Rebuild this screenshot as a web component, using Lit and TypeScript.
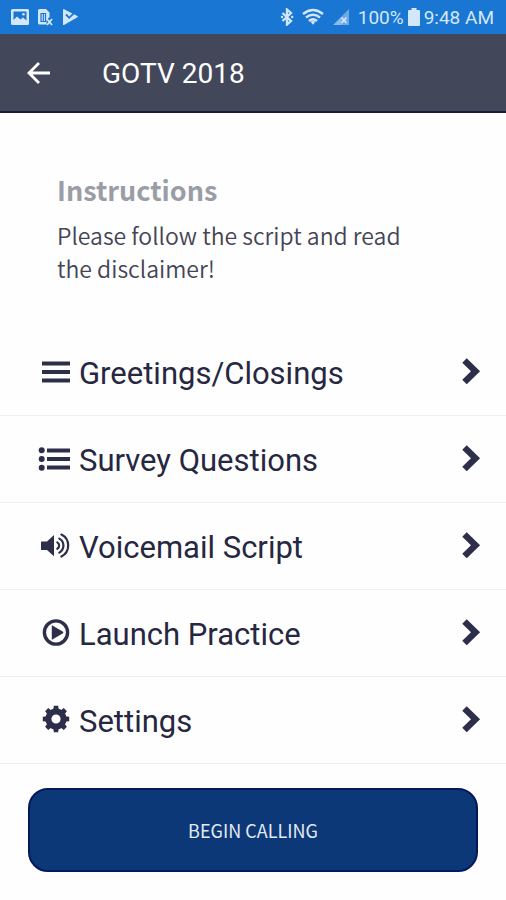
import { LitElement, html, svg, css } from "lit";
import { customElement } from "lit/decorators.js";

const icons = {
  bars: svg`<path d="M6 7.5H30M6 16H30M6 24.5H30" stroke="currentColor" stroke-width="4" stroke-linecap="square" />`,
  list: svg`
    <path d="M11 7.5H30M11 16H30M11 24.5H30" stroke="currentColor" stroke-width="4" stroke-linecap="square" />
    <circle cx="3.7" cy="7.3" r="3" /><circle cx="3.7" cy="16" r="3" /><circle cx="3.7" cy="24.7" r="3" />`,
  volume: svg`
    <path d="M3.5 11.5H9L16 5V26.2L9 20H3.5Q3 20 3 19.5V12Q3 11.5 3.5 11.5Z" />
    <path d="M19.3 12.4A3.7 3.7 0 0 1 19.3 18.8M21.3 8.6A8 8 0 0 1 21.3 22.6M23.4 4.6A12.3 12.3 0 0 1 23.4 26.6"
      fill="none" stroke="currentColor" stroke-width="2.2" stroke-linecap="round" />`,
  play: svg`
    <circle cx="18" cy="15.5" r="11.6" fill="none" stroke="currentColor" stroke-width="3.4" />
    <path d="M13.8 8.7Q13.8 8.1 14.4 8.5L25 14.8Q25.8 15.5 25 16.2L14.4 22.5Q13.8 22.9 13.8 22.3Z" />`,
  gear: svg`
    <circle cx="18" cy="15" r="7.6" fill="none" stroke="currentColor" stroke-width="6" />
    ${[0, 45, 90, 135].map(
      (a) => svg`<path transform="rotate(${a} 18 15)" d="M15.8 1.8H20.2L20.8 6.5H15.2ZM15.8 28.2H20.2L20.8 23.5H15.2Z" />`
    )}`,
};

const items = [
  { icon: icons.bars, label: "Greetings/Closings" },
  { icon: icons.list, label: "Survey Questions" },
  { icon: icons.volume, label: "Voicemail Script" },
  { icon: icons.play, label: "Launch Practice" },
  { icon: icons.gear, label: "Settings" },
];

@customElement("status-bar")
class StatusBar extends LitElement {
  static styles = css`
    :host {
      display: flex;
      align-items: center;
      justify-content: space-between;
      height: 34px;
      padding: 0 12px 0 11px;
      background: #1976d2;
      color: #d3e7fa;
      font: 19px/34px Roboto, sans-serif;
      white-space: nowrap;
    }
    .group {
      display: flex;
      align-items: center;
    }
    .notices {
      gap: 8px;
    }
    .network {
      gap: 8px;
      margin-right: 8px;
    }
    .battery {
      margin: 0 4px;
    }
    svg {
      display: block;
      fill: currentColor;
    }
    .time, .level {
      padding-top: 2px;
    }
  `;

  render() {
    return html`
      <div class="group notices">
        <svg width="18" height="18" viewBox="0 0 18 18">
          <path fill-rule="evenodd" d="M1.5 1H16.5Q18 1 18 2.5V15.5Q18 17 16.5 17H1.5Q0 17 0 15.5V2.5Q0 1 1.5 1ZM2.5 3.5V12L6 8.5L9.5 11.5L12 9.5L15.5 12.5V3.5Z" />
          <circle cx="12.5" cy="6.2" r="1.3" />
        </svg>
        <svg width="17" height="18" viewBox="0 0 17 18">
          <path d="M1 2.5Q1 1 2.5 1H9L12.5 4.5V9L9.5 12V16.5H2.5Q1 16.5 1 15Z" />
          <path d="M4 5.5H8.5V13.5H4ZM6.3 5.5V13.5" fill="none" stroke="#1976d2" stroke-width="1.2" />
          <path d="M10 11L15 17M15 11L10 17" stroke="currentColor" stroke-width="1.8" />
        </svg>
        <svg width="17" height="18" viewBox="0 0 17 18">
          <path d="M1 1.5Q1 .7 2 1.2L15.4 8Q16.2 8.5 15.4 9.2L2 17Q1 17.4 1 16.4Z" />
          <path d="M4 6.5L7.2 9.8L14 3.2" fill="none" stroke="#1976d2" stroke-width="1.8" />
        </svg>
      </div>
      <div class="group">
        <div class="group network">
          <svg width="14" height="18" viewBox="0 0 14 18">
            <path d="M2.5 5L11 13L7 16.5V1.5L11 5L2.5 13" fill="none" stroke="currentColor" stroke-width="2.3" />
            <circle cx="2" cy="9" r="1.2" /><circle cx="12.2" cy="9" r="1.2" />
          </svg>
          <svg width="22" height="18" viewBox="0 0 22 18">
            <path d="M1 6Q11 -2 21 6M4 9.5Q11 4 18 9.5M7 13Q11 9.8 15 13" fill="none" stroke="currentColor" stroke-width="2.5" />
            <path d="M8.5 13.8Q11 12 13.5 13.8L11 16.8Z" />
          </svg>
          <svg width="18" height="18" viewBox="0 0 18 18">
            <path d="M17 1V17H1Z" opacity=".45" />
            <path d="M9.5 9V17H1.5Z" opacity=".3" />
            <path d="M9.5 9.5L14.5 15M14.5 9.5L9.5 15" stroke="currentColor" stroke-width="1.8" />
          </svg>
        </div>
        <span class="level">100%</span>
        <svg class="battery" width="12" height="18" viewBox="0 0 12 18">
          <path d="M3.5 0H8.5V2H11Q12 2 12 3V17Q12 18 11 18H1Q0 18 0 17V3Q0 2 1 2H3.5Z" />
        </svg>
        <span class="time">9:48 AM</span>
      </div>
    `;
  }
}

@customElement("app-root")
class AppRoot extends LitElement {
  static styles = css`
    :host {
      display: block;
      min-height: 100vh;
      background: #fefefe;
      color: #262740;
      font-family: Roboto, sans-serif;
    }
    svg {
      display: block;
      flex: none;
      fill: currentColor;
    }
    button {
      margin: 0;
      border: 0;
      font: inherit;
      color: inherit;
      cursor: pointer;
    }
    .header {
      display: flex;
      align-items: center;
      gap: 48px;
      box-sizing: border-box;
      height: 79px;
      padding: 0 24px;
      border-bottom: 2px solid #1b1c3d;
      background: #43475a;
      color: #fff;
    }
    .back {
      padding: 0;
      background: none;
    }
    h1 {
      margin: 0;
      padding-top: 2px;
      font-size: 28px;
      line-height: 32px;
      font-weight: 400;
    }
    .intro {
      padding: 59px 57px 44px;
      font-family: "Noto Sans CJK SC", sans-serif;
    }
    h2 {
      margin: 0 0 11px;
      color: #9a9da6;
      font-size: 27px;
      line-height: 36px;
      font-weight: 700;
    }
    p {
      max-width: 360px;
      margin: 0;
      color: #434454;
      font-size: 23px;
      line-height: 33px;
      font-weight: 350;
    }
    ul {
      margin: 0;
      padding: 0;
      list-style: none;
    }
    li {
      border-bottom: 1px solid #f0f0f2;
    }
    .row {
      display: flex;
      align-items: center;
      gap: 9px;
      width: 100%;
      height: 86px;
      padding: 0 25px 0 38px;
      background: none;
      text-align: left;
      font-size: 31px;
      line-height: 36px;
    }
    .icon, .chevron {
      color: #2c2e4a;
    }
    .label {
      flex: 1;
      padding-top: 4px;
    }
    .footer {
      padding: 24px 28px;
    }
    .call {
      display: block;
      width: 100%;
      height: 84px;
      border: 2px solid #04195c;
      border-radius: 20px;
      background: #0d3877;
      color: #e4eaf4;
      font-family: "Noto Sans CJK SC", sans-serif;
      font-size: 18px;
      line-height: 24px;
    }
  `;

  render() {
    return html`
      <status-bar></status-bar>
      <header class="header">
        <button class="back" aria-label="Back">
          <svg width="30" height="30" viewBox="0 0 30 30">
            <path d="M26 15H6M15 5L5 15L15 25" fill="none" stroke="currentColor" stroke-width="2.8" />
          </svg>
        </button>
        <h1>GOTV 2018</h1>
      </header>
      <main>
        <section class="intro">
          <h2>Instructions</h2>
          <p>Please follow the script and read the disclaimer!</p>
        </section>
        <ul>
          ${items.map(
            (item) => html`<li>
              <button class="row">
                <svg class="icon" width="32" height="32" viewBox="0 0 32 32">${item.icon}</svg>
                <span class="label">${item.label}</span>
                <svg class="chevron" width="20" height="28" viewBox="0 0 20 28">
                  <path d="M3.5 2.5L14.5 13.2L3.5 24" fill="none" stroke="currentColor" stroke-width="6.4" />
                </svg>
              </button>
            </li>`
          )}
        </ul>
        <div class="footer"><button class="call">BEGIN CALLING</button></div>
      </main>
    `;
  }
}
